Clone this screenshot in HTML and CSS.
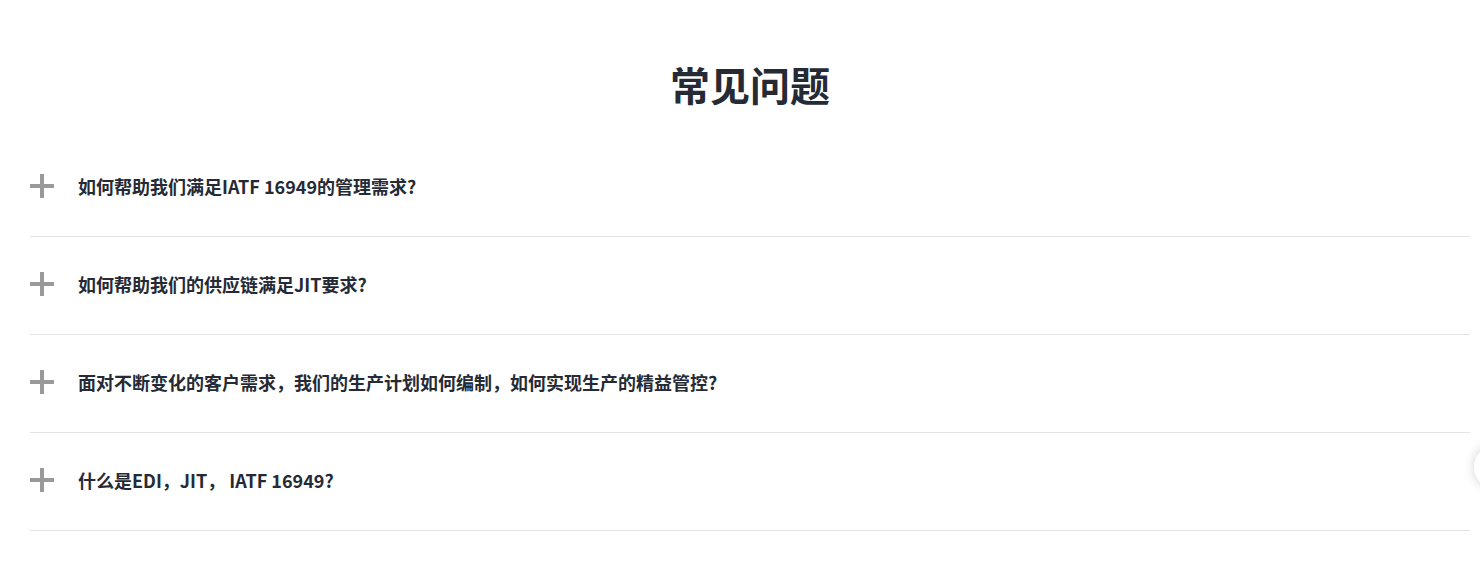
FILE: index.html
```html
<!DOCTYPE html>
<html>
	<head>
		<meta charset="UTF-8">
		<title>常见问题</title>
		<link rel="stylesheet" href="styles.css">
	</head>
	<body>
		<div class="faq">
			<h2 class="faq-title">常见问题</h2>
			<!--问题列表-->
			<ul class="faq-list">
				<li class="faq-item">
					<span class="plus"></span>
					<span class="faq-q">如何帮助我们满足IATF 16949的管理需求?</span>
				</li>
				<li class="faq-item">
					<span class="plus"></span>
					<span class="faq-q">如何帮助我们的供应链满足JIT要求?</span>
				</li>
				<li class="faq-item">
					<span class="plus"></span>
					<span class="faq-q">面对不断变化的客户需求，我们的生产计划如何编制，如何实现生产的精益管控?</span>
				</li>
				<li class="faq-item">
					<span class="plus"></span>
					<span class="faq-q">什么是EDI，JIT， IATF 16949?</span>
				</li>
			</ul>
		</div>
		<!--右侧浮动按钮-->
		<div class="side-btn"></div>
	</body>
</html>
```
FILE: styles.css
```css
* {
	margin: 0;
	padding: 0;
}

body {
	font-family: "Noto Sans CJK SC", "Noto Sans", sans-serif;
	background-color: #fff;
	overflow: hidden;
}

.faq {
	padding: 0 10px 0 30px;
}

.faq-title {
	padding-top: 54px;
	margin-bottom: 25px;
	font-size: 40px;
	line-height: 60px;
	font-weight: bold;
	text-align: center;
	color: #252a35;
}

.faq-list {
	list-style: none;
}

.faq-item {
	display: flex;
	align-items: center;
	gap: 24px;
	padding: 35px 0 38px;
	border-bottom: 1px solid #e3e3e3;
}

.plus {
	position: relative;
	width: 24px;
	height: 24px;
	flex-shrink: 0;
}

.plus::before,
.plus::after {
	content: "";
	position: absolute;
	background-color: #999;
}

.plus::before {
	left: 0;
	top: 10px;
	width: 24px;
	height: 4px;
}

.plus::after {
	left: 10px;
	top: 0;
	width: 4px;
	height: 24px;
}

.faq-q {
	font-size: 18px;
	line-height: 24px;
	font-weight: bold;
	color: #252a35;
}

.side-btn {
	position: fixed;
	right: -38px;
	top: 445px;
	width: 44px;
	height: 44px;
	border-radius: 50%;
	background-color: #fff;
	box-shadow: 0 0 12px rgba(0,0,0,0.18);
}
```
